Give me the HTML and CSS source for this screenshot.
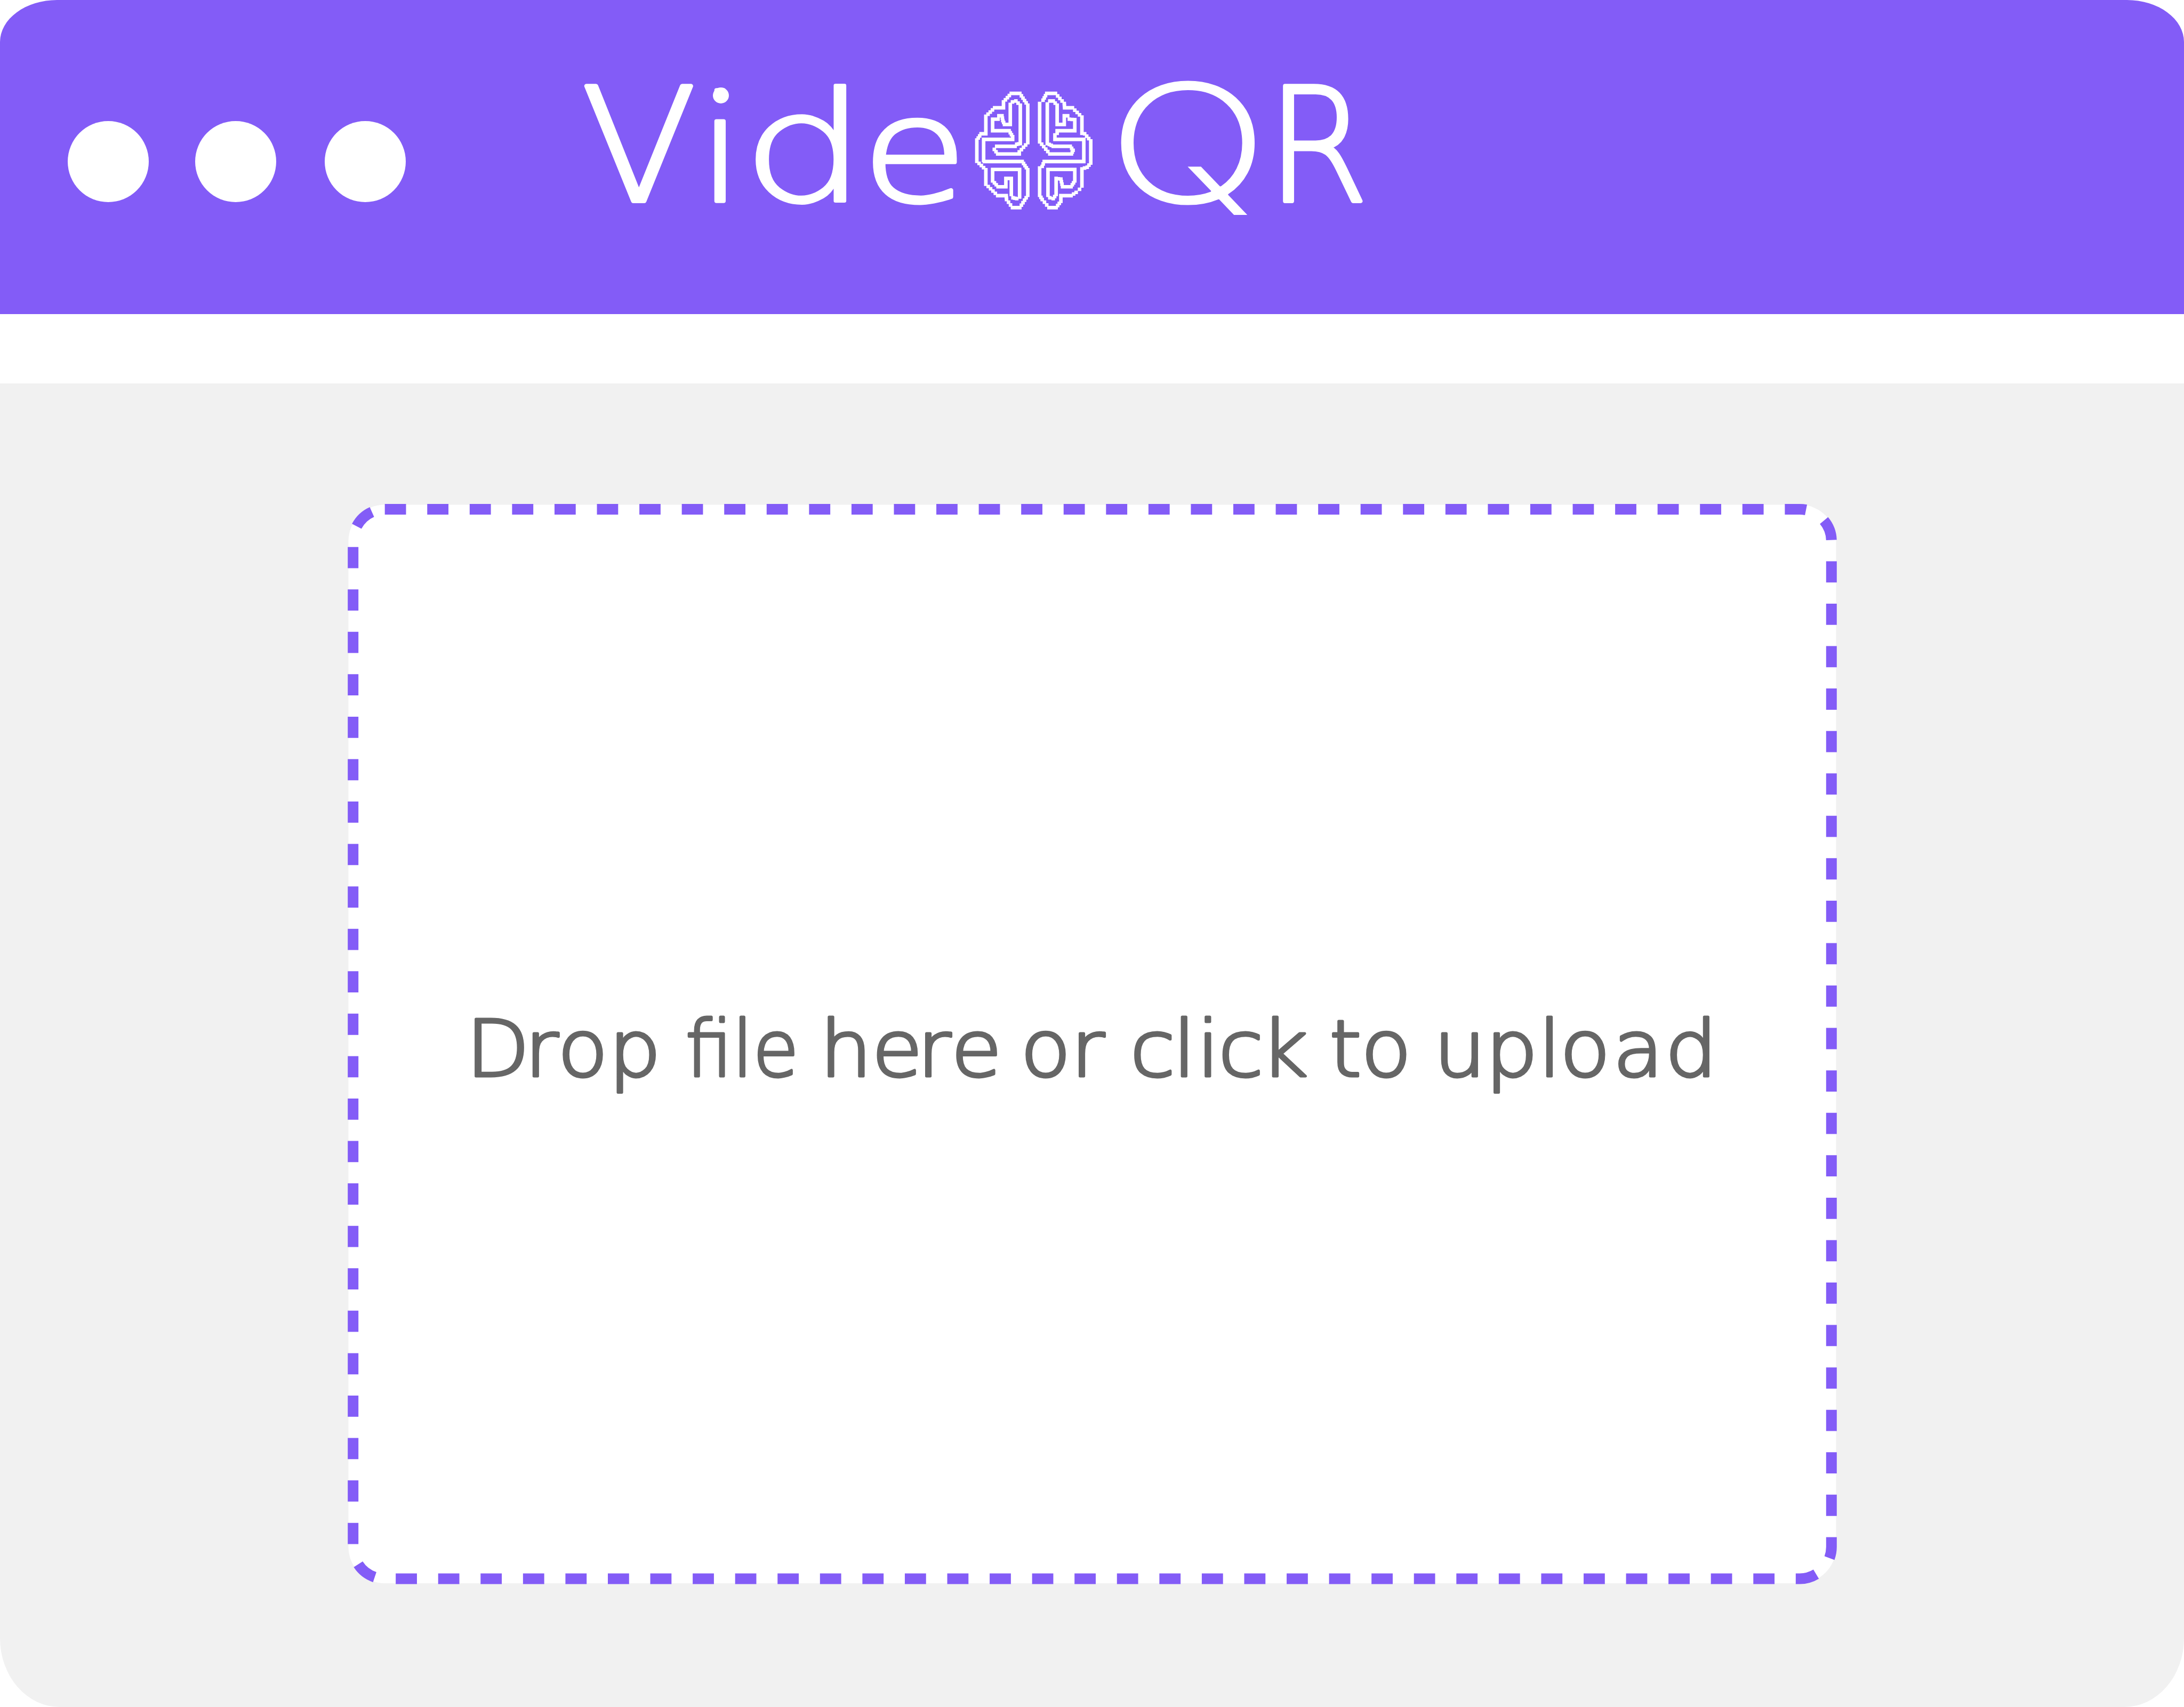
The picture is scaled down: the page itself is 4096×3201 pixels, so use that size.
FILE: index.html
```html
<!DOCTYPE html>
<html lang="en">
<head>
<meta charset="utf-8">
<title>VideoQR</title>
<link rel="stylesheet" href="styles.css">
</head>
<body>
<div class="window">
  <header class="titlebar">
    <div class="controls"><span class="dot"></span><span class="dot"></span><span class="dot"></span></div>
    <svg class="logo" viewBox="1060 40 1640 500">
      <g class="letters">
        <text transform="translate(1090.5 377) scale(1.065 1)">V</text>
        <text transform="translate(1310.5 377) scale(1 .925)">i</text>
        <circle cx="1352" cy="179" r="12"/>
        <text class="fine" transform="translate(1391.6 377) scale(1.245 .965)">d</text>
        <text transform="translate(1616 377) scale(1.09 .92)">e</text>
        <text class="q" transform="translate(2075 383) scale(1.275 1)">Q</text>
        <text transform="translate(2376.2 377) scale(.925 1)">R</text>
      </g>
      <g transform="translate(1814.5 157.6) scale(.3184)"><path id="brain" class="brain"/></g>
    </svg>
  </header>
  <main class="content">
    <svg class="dropzone" viewBox="651 945 2793 2026">
      <rect class="zone-fill" x="652.5" y="946.5" width="2790" height="2022.5" rx="68"/>
      <rect class="zone-border" x="661.2" y="955" width="2772.6" height="2005.5" rx="59.5"/>
      <g class="prompt" transform="scale(1.06 1)">
        <text y="2017.5"><tspan x="823.5 927.2 985.6 1076">Drop</tspan></text>
        <text transform="translate(1212 2017.5) scale(.9 1)">file</text>
        <text y="2017.5"><tspan x="1449.5 1541.6 1621.8 1681.8">here</tspan> <tspan x="1804.4 1893.3">or</tspan> <tspan x="1998.4 2074.3 2116.6 2154.6 2229">click</tspan> <tspan x="2351 2407">to</tspan> <tspan x="2535.5 2627.4 2720.7 2758.9 2852.8 2945">upload</tspan></text>
      </g>
    </svg>
  </main>
</div>
<script src="brain.js"></script>
</body>
</html>
```
FILE: styles.css
```css
body { margin: 0; background: #fff; }
.window { display: flex; flex-direction: column; gap: 130px; height: 3201px; }
.titlebar {
  box-sizing: border-box; height: 589px; background: #835cf7;
  border-radius: 107px 107px 0 0 / 79px 79px 0 0;
  display: flex; align-items: flex-start; padding-left: 127px;
}
.controls { display: flex; gap: 88px; padding-top: 226.5px; width: 933px; }
.dot { width: 152px; height: 152px; border-radius: 50%; background: #fff; flex: none; }
.dot:nth-child(2) { margin: 0 3px 0 -1px; }
.logo { width: 1640px; height: 500px; margin-top: 40px; overflow: visible; }
.letters text {
  font: 200 296px "DejaVu Sans", sans-serif; fill: #fff;
  stroke: #fff; stroke-width: 8; stroke-linejoin: round;
}
.letters circle { fill: #fff; stroke: #fff; stroke-width: 6; }
.letters .fine { stroke-width: 6; }
.letters .q { font: 300 316px Inter, sans-serif; stroke: #835cf7; stroke-width: 3; }
.brain { fill: #fff; }
.content {
  flex: 1; background: #f1f1f1; display: flex; justify-content: center;
  border-radius: 0 0 112px 112px / 0 0 129px 129px; padding-top: 226px;
}
.dropzone { width: 2793px; height: 2026px; }
.zone-fill { fill: #fff; }
.zone-border { fill: none; stroke: #835cf7; stroke-width: 20; stroke-dasharray: 39.783; }
.prompt text {
  font: 200 146px "DejaVu Sans", sans-serif; fill: #666;
  stroke: #666; stroke-width: 5; stroke-linejoin: round;
}
```
FILE: brain.js
```js
// Each closed outline of the maze-like brain, stamped with square pixels.
const outlines = [
  '258,55 308,55 355,125 355,345 305,400 305,412 178,412 158,385 172,367 280,367 290,355 311,350 311,125 285,100 265,105 252,120 252,238 218,238 208,215 203,187 185,187 180,207 148,207 148,275 245,275 266,310 266,326 95,326 95,450 100,456 322,456 355,505 355,655 308,728 265,728 230,680 228,657 178,657 108,590 108,505 55,455 55,330 80,293 108,293 108,190 160,140 212,140 212,105',
  '148,503 307,503 307,665 290,675 268,670 258,650 258,556 226,556 226,605 180,605 148,570',
  '467,55 518,55 570,115 572,140 618,140 674,195 674,290 690,293 726,335 726,465 705,490 674,500 674,600 660,620 640,638 610,657 550,657 550,690 522,728 480,728 440,680 425,655 425,495 440,485 452,456 685,456 685,326 515,326 515,300 528,290 528,275 632,275 632,210 600,207 590,187 570,187 570,238 528,238 528,125 505,100 485,100 470,118 470,350 505,367 605,367 622,390 612,412 485,412 425,340 425,115 445,95',
  '474,503 632,503 632,570 610,605 560,605 550,560 522,556 522,650 505,675 485,670 474,655'
];
const size = 21, step = 14;
let d = '';
for (const outline of outlines) {
  const pts = outline.split(' ').map(p => p.split(',').map(Number));
  pts.forEach(([x, y], i) => {
    const [u, v] = pts[(i + 1) % pts.length];
    const n = Math.max(1, Math.round(Math.max(Math.abs(u - x), Math.abs(v - y)) / step));
    for (let k = 0; k < n; k++) {
      const cx = x + (u - x) * k / n, cy = y + (v - y) * k / n;
      d += `M${cx - size / 2} ${cy - size / 2}h${size}v${size}h${-size}z`;
    }
  });
}
document.getElementById('brain').setAttribute('d', d);
```
